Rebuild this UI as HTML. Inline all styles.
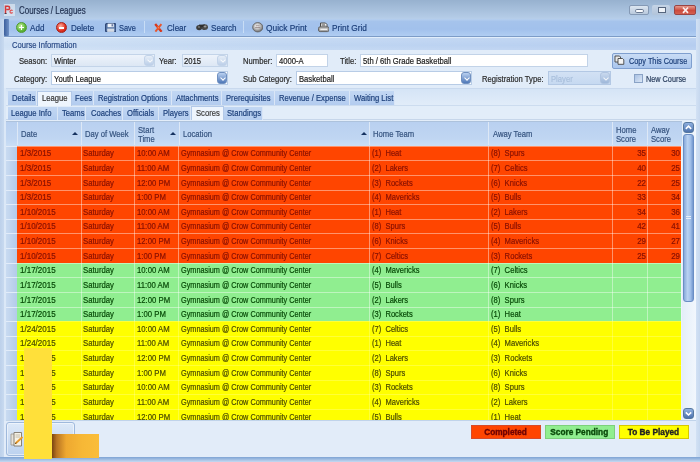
<!DOCTYPE html>
<html><head><meta charset="utf-8">
<style>
*{box-sizing:border-box;margin:0;padding:0}
html,body{width:700px;height:462px;overflow:hidden}
body{position:relative;background:#c9dcf1;font-family:"Liberation Sans",sans-serif;font-size:9px;color:#1f3b6e}
.a{position:absolute}
.t{position:absolute;white-space:nowrap;line-height:9px;font-size:9px;transform:scaleX(.85);transform-origin:0 0}
/* title bar */
#title{left:0;top:0;width:700px;height:19.5px;background:linear-gradient(#97b1cf,#b3cbe6 85%,#b9d0ec)}
#tb{left:4px;top:19px;width:692px;height:18px;background:linear-gradient(#b6cfee,#a5c3ec 15%,#a2c1ec 60%,#b0cdf2);border-bottom:1px solid #7d9cc7}
#tbedge{left:4px;top:19px;width:5px;height:17px;background:linear-gradient(90deg,#3c5f9c,#6f91c6);border-radius:1px}
.sep{position:absolute;top:21px;width:1px;height:12px;background:rgba(225,238,252,.6)}
.tbt{color:#1c3f7a;font-size:9.5px}
#ci{left:4px;top:37px;width:692px;height:13px;background:linear-gradient(rgba(255,255,255,.12),rgba(255,255,255,0) 60%,rgba(255,255,255,.1)),linear-gradient(90deg,#d0e1f5,#c0d6f2 40%,#b5cdf0);border-top:1px solid #e2eefb}
#form{left:4px;top:50px;width:692px;height:38px;background:#e1ecf9}
.inp{position:absolute;background:#fff;border:1px solid #c2d3e8;height:13.8px}
.cmb{position:absolute;border:1px solid #c3d4e9;height:13.8px;background:linear-gradient(#edf3fb,#dde7f4)}
.ddb{position:absolute;right:0;top:0;width:10px;height:11.8px;border-radius:3px;background:linear-gradient(#e6eef8,#bccfe8);border:1px solid #c2d3e9}
.ddb::after{content:"";position:absolute;left:3px;top:2.8px;width:3px;height:3px;border-right:1.1px solid rgba(255,255,255,.85);border-bottom:1.1px solid rgba(255,255,255,.85);transform:rotate(45deg)}
.ddb.act{background:linear-gradient(#b9d0f0,#4f78b8);border-color:#7090c0}
.ddb.act::after{content:"";position:absolute;left:3px;top:3px;width:3px;height:3px;border-right:1.2px solid #fff;border-bottom:1.2px solid #fff;transform:rotate(45deg)}
.lab{color:#2b2b2b}
#tabs{left:4px;top:88px;width:692px;height:18px;background:linear-gradient(#d5e4f6,#e1ecf9);border-top:1px solid #c9d9ee;border-bottom:1px solid #ccdcef}
.tab{position:absolute;height:14px;background:linear-gradient(#c2d7f3,#b3ccef);border-right:1px solid #dae6f6}
.tab.sel{background:#eef5fd;border:1px solid #b3c9e8;border-bottom:none}
#sub{left:4px;top:106px;width:692px;height:14px;background:#e2edf9;border-bottom:1px solid #c6d6ea}
/* grid */
#gridbg{left:4px;top:120px;width:692px;height:300px;background:#e3edf9}
#ghead{left:6px;top:121px;width:675.5px;height:24.7px;background:linear-gradient(#b9d0f0,#c0d6f2 70%,#cadef5);border-top:1px solid #adc2dc}
.hsep{position:absolute;top:122px;width:1px;height:23px;background:#dde8f6}
.ht{color:#34527e;-webkit-text-stroke:.1px currentColor}
.arrow{position:absolute;width:0;height:0;border-left:3px solid transparent;border-right:3px solid transparent;border-bottom:3.2px solid #15315f}
#rows{left:17px;top:0;width:664.5px;height:420px;overflow:hidden;position:absolute}
.row{position:absolute;left:17.3px;width:664.1px;height:14.625px;box-shadow:inset 0 1px 0 rgba(255,255,255,.42)}
.vl{position:absolute;top:0;width:1px;height:100%;background:rgba(255,255,255,.42)}
.row.r{background:#ff4500;color:#861000}
.row.g{background:#90ee90;color:#064806}
.row.y{background:#ffff00;color:#4a4a00;box-shadow:inset 0 1px 0 rgba(255,255,255,.22)}
.row.y .vl{background:rgba(255,255,255,.22)}
.ct{position:absolute;top:3.6px;white-space:nowrap;line-height:9px;font-size:9px;transform:scaleX(.85);transform-origin:0 0}
.ct.rt{transform-origin:100% 0}
.rh{position:absolute;left:6px;width:11px;height:14.625px;background:linear-gradient(90deg,#c9dbf1,#b3cbea);border-top:1px solid #e2ecf9}
#clip{position:absolute;left:0;top:145.7px;width:700px;height:274.3px;overflow:hidden}
/* scrollbar */
#sb{left:681.5px;top:121px;width:14px;height:299px;background:linear-gradient(90deg,#e4eef9,#f2f7fd)}
.sbb{position:absolute;left:682.7px;width:11px;height:11px;border-radius:3px;background:linear-gradient(#8fb0e0,#4d72ad);border:1px solid #56789f}
#thumb{left:682.8px;top:134px;width:11.2px;height:167.5px;border-radius:3px;background:linear-gradient(90deg,#87a9da,#b9d2f2 40%,#a3c1ea 70%,#7498cf);border:1px solid #6a8ec5}
#foot{left:4px;top:420px;width:692px;height:38px;background:#e2ecf9;border-top:1px solid #c0d3ea}
.leg{position:absolute;top:425px;height:14px;font-weight:bold;font-size:9.5px;text-align:center;line-height:10px;padding-top:1px;-webkit-text-stroke:.4px currentColor}
#border-b{left:0;top:457px;width:700px;height:5px;background:linear-gradient(#7ea3d4,#c5d9f1)}
#wrap{position:absolute;left:0;top:0;width:700px;height:462px;filter:blur(.5px)}
.ct,.t{-webkit-text-stroke:.2px currentColor}
</style></head><body><div id="wrap">
<!-- title bar -->
<div id="title" class="a"></div>
<div class="a" style="left:3.5px;top:3.5px;width:11px;height:12px;background:rgba(240,246,252,.55)"></div>
<svg class="a" style="left:4px;top:4.5px" width="9" height="9" viewBox="0 0 9 9"><path d="M1.5 8.5V1.2H3.8Q5.6 1.2 5.6 2.9Q5.6 4.6 3.8 4.6H2.4" fill="none" stroke="#d43a3a" stroke-width="1.5"/><path d="M8.6 5.6Q8 5 7.2 5.1Q6 5.4 6 6.7Q6.1 8.1 7.3 8.1Q8.1 8.1 8.6 7.5" fill="none" stroke="#e05050" stroke-width="1.2"/><path d="M0.6 8.6H2.6" stroke="#3a3040" stroke-width="1"/></svg>
<span class="t" style="left:19px;top:5.5px;font-size:10px;color:#1f2f4f;transform:scaleX(.795)">Courses / Leagues</span>
<!-- window buttons -->
<div class="a" style="left:628.6px;top:4.6px;width:20.4px;height:10.8px;border:1px solid #8499b5;border-radius:2px;background:linear-gradient(#dce6f1,#b9c9dc)"></div>
<div class="a" style="left:635px;top:9px;width:8.8px;height:3.6px;background:#fafcff;border:.8px solid #6a7a92;border-radius:1.8px"></div>
<div class="a" style="left:652px;top:4.6px;width:18.3px;height:10.8px;border-radius:2px;background:linear-gradient(#c5d4e6,#b2c4da)"></div>
<div class="a" style="left:657.7px;top:7.4px;width:8px;height:5.2px;background:#eef2f7;border:1px solid #56667e;border-top-width:1.6px"></div>
<div class="a" style="left:674px;top:4.6px;width:22px;height:10.8px;border:1px solid #9a4545;border-radius:2px;background:linear-gradient(#e49a8e,#cc4a3c 55%,#d46050)"></div>
<svg class="a" style="left:680.5px;top:5.8px" width="9" height="8.4" viewBox="0 0 9 8.4"><path d="M2 1.5L7 6.9M7 1.5L2 6.9" stroke="#fbeeee" stroke-width="1.7"/></svg>
<!-- toolbar -->
<div id="tb" class="a"></div>
<div id="tbedge" class="a"></div>
<div class="a" style="left:16px;top:22px;width:11px;height:11px;border-radius:50%;background:radial-gradient(circle at 40% 35%,#c8f0a0,#5fb83a 60%,#3d8c22);border:1px solid #4f9a30"></div>
<div class="a" style="left:19px;top:27px;width:5px;height:1.4px;background:#fff"></div>
<div class="a" style="left:20.8px;top:25.2px;width:1.4px;height:5px;background:#fff"></div>
<span class="t tbt" style="left:30px;top:23px">Add</span>
<div class="a" style="left:56px;top:22px;width:11px;height:11px;border-radius:50%;background:radial-gradient(circle at 40% 35%,#ffb0a0,#e03020 60%,#b01810);border:1px solid #a82018"></div>
<div class="a" style="left:59px;top:27px;width:5px;height:1.6px;background:#fff"></div>
<span class="t tbt" style="left:71px;top:23px">Delete</span>
<svg class="a" style="left:104.5px;top:22.5px" width="11.5" height="9.5" viewBox="0 0 11.5 9.5"><rect x="0.6" y="0.6" width="10.3" height="8.3" rx="1.2" fill="#5a78a8" stroke="#2a4373" stroke-width="1.1"/><rect x="2.6" y="0.6" width="6.2" height="3.6" fill="#eef2f8"/><rect x="2.2" y="5.6" width="7" height="3.3" fill="#d4dbe6"/><rect x="6.6" y="1.2" width="1.2" height="2.2" fill="#44598a"/></svg>
<span class="t tbt" style="left:119px;top:23px;transform:scaleX(.78)">Save</span>
<div class="sep" style="left:144px"></div>
<svg class="a" style="left:153.5px;top:22.5px" width="9" height="9.5" viewBox="0 0 9 9.5"><path d="M1.2 1 L7.6 8.8" stroke="#d8381c" stroke-width="2.3"/><path d="M7.4 1.2 L1.4 8.6" stroke="#e9552a" stroke-width="1.9"/><path d="M3.5 3.6L5.2 5.6" stroke="#ff9a60" stroke-width=".9"/></svg>
<span class="t tbt" style="left:167px;top:23px">Clear</span>
<svg class="a" style="left:195.5px;top:23px" width="12.5" height="8" viewBox="0 0 12.5 8"><ellipse cx="3.2" cy="4.6" rx="3" ry="2.6" fill="#3a3a3a"/><ellipse cx="8.8" cy="4.2" rx="3.3" ry="2.9" fill="#4a4a4a"/><rect x="3" y="1.6" width="6" height="2.6" fill="#2e2e2e"/><ellipse cx="9" cy="3.6" rx="1.5" ry="1" fill="#9a9a9a"/><ellipse cx="3" cy="4" rx="1.2" ry=".8" fill="#888"/></svg>
<span class="t tbt" style="left:210.5px;top:23px">Search</span>
<div class="sep" style="left:243px"></div>
<svg class="a" style="left:251.5px;top:22px" width="11.5" height="10.5" viewBox="0 0 11.5 10.5"><defs><radialGradient id="qp" cx="45%" cy="40%" r="60%"><stop offset="0" stop-color="#ffffff"/><stop offset=".45" stop-color="#c9c9c9"/><stop offset="1" stop-color="#6a6a6a"/></radialGradient></defs><ellipse cx="5.75" cy="5.25" rx="5.1" ry="4.7" fill="url(#qp)" stroke="#5f5f5f" stroke-width=".8"/><path d="M3.2 5.6H8.3M4 3.8H7.5" stroke="#8a7a7a" stroke-width=".8"/></svg>
<span class="t tbt" style="left:266px;top:23px;transform:scaleX(.88)">Quick Print</span>
<svg class="a" style="left:317.5px;top:22px" width="11.5" height="10.5" viewBox="0 0 11.5 10.5"><path d="M2.5 5V1H7.5L9 2.5V5" fill="#f4f4f4" stroke="#4a4a4a" stroke-width="1"/><path d="M3.6 2.3H7M3.6 3.6H7.4" stroke="#5a5a5a" stroke-width=".7"/><rect x="0.5" y="4.8" width="10.5" height="4.8" rx="1.6" fill="#a9a9a9" stroke="#5a5a5a" stroke-width=".9"/><rect x="2.3" y="6.6" width="7" height="1.4" fill="#eee"/></svg>
<span class="t tbt" style="left:332px;top:23px;transform:scaleX(.87)">Print Grid</span>
<!-- course information -->
<div id="ci" class="a"></div>
<span class="t" style="left:11.5px;top:40px;color:#2a4a86;font-size:9.5px;transform:scaleX(.8)">Course Information</span>
<div id="form" class="a"></div>
<span class="t lab" style="left:19px;top:56.6px">Season:</span>
<div class="cmb" style="left:51px;top:53.7px;width:104px"><div class="ddb"></div></div>
<span class="t" style="left:54px;top:56.6px;color:#222">Winter</span>
<span class="t lab" style="left:159px;top:56.6px">Year:</span>
<div class="cmb" style="left:181.5px;top:53.7px;width:46.5px"><div class="ddb"></div></div>
<span class="t" style="left:184px;top:56.6px;color:#222">2015</span>
<span class="t lab" style="left:243px;top:56.6px">Number:</span>
<div class="inp" style="left:276px;top:53.7px;width:52px"></div>
<span class="t" style="left:279px;top:56.6px;color:#222">4000-A</span>
<span class="t lab" style="left:339.5px;top:56.6px">Title:</span>
<div class="inp" style="left:360px;top:53.7px;width:228px"></div>
<span class="t" style="left:363px;top:56.6px;color:#222">5th / 6th Grade Basketball</span>
<div class="a" style="left:612px;top:53px;width:80px;height:15.5px;border:1px solid #7f9fcf;border-radius:2px;background:linear-gradient(#c9dcf5,#a9c5ed)"></div>
<svg class="a" style="left:614px;top:54.5px" width="11" height="10" viewBox="0 0 11 10"><path d="M1 1H5.5L6.5 2V7H1Z" fill="#e8e8e8" stroke="#444" stroke-width=".9"/><path d="M4 3.5H8.5L9.8 4.8V9.3H4Z" fill="#f4f4f4" stroke="#444" stroke-width=".9"/></svg>
<span class="t" style="left:629px;top:56.5px;color:#1c3f7a;transform:scaleX(.81)">Copy This Course</span>
<span class="t lab" style="left:13.5px;top:74.5px">Category:</span>
<div class="inp" style="left:51px;top:71.3px;width:176.5px;border-color:#b8cce6"><div class="ddb act"></div></div>
<span class="t" style="left:54px;top:74.5px;color:#222">Youth League</span>
<span class="t lab" style="left:243px;top:74.5px">Sub Category:</span>
<div class="inp" style="left:296px;top:71.3px;width:176px;border-color:#b8cce6"><div class="ddb act"></div></div>
<span class="t" style="left:299px;top:74.5px;color:#222">Basketball</span>
<span class="t lab" style="left:481.5px;top:74.5px">Registration Type:</span>
<div class="cmb" style="left:548px;top:71.3px;width:63px;background:linear-gradient(#d2e1f4,#c6d9f1);border-color:#b3c8e4"><div class="ddb" style="background:linear-gradient(#c9d9ee,#9fb8da);border-color:#b0c4e0"></div></div>
<span class="t" style="left:551px;top:74.5px;color:#a9bfdc">Player</span>
<div class="a" style="left:634px;top:74px;width:9px;height:9px;border:1px solid #8aa3c6;background:linear-gradient(135deg,#a9c1e3,#dbe7f6)"></div>
<span class="t" style="left:646px;top:74.5px;color:#2a3e5e;transform:scaleX(.81)">New Course</span>
<!-- tabs -->
<div id="tabs" class="a"></div>
<div class="tab" style="left:8px;top:91px;width:29px"></div>
<div class="tab sel" style="left:37px;top:90.5px;width:35px;height:16px"></div>
<div class="tab" style="left:72px;top:91px;width:22px"></div>
<div class="tab" style="left:94px;top:91px;width:78px"></div>
<div class="tab" style="left:172px;top:91px;width:50px"></div>
<div class="tab" style="left:222px;top:91px;width:53px"></div>
<div class="tab" style="left:275px;top:91px;width:75px"></div>
<div class="tab" style="left:350px;top:91px;width:44.5px"></div>
<span class="t tbt" style="left:11.5px;top:94px;font-size:9px">Details</span>
<span class="t" style="left:42px;top:94px;color:#333">League</span>
<span class="t tbt" style="left:75px;top:94px;font-size:9px">Fees</span>
<span class="t tbt" style="left:98px;top:94px;font-size:9px">Registration Options</span>
<span class="t tbt" style="left:175.5px;top:94px;font-size:9px">Attachments</span>
<span class="t tbt" style="left:225.5px;top:94px;font-size:9px">Prerequisites</span>
<span class="t tbt" style="left:279px;top:94px;font-size:9px">Revenue / Expense</span>
<span class="t tbt" style="left:353.5px;top:94px;font-size:9px">Waiting List</span>
<div id="sub" class="a"></div>
<div class="tab" style="left:8px;top:106.5px;width:50px;height:13.5px"></div>
<div class="tab" style="left:58px;top:106.5px;width:28px;height:13.5px"></div>
<div class="tab" style="left:86px;top:106.5px;width:37px;height:13.5px"></div>
<div class="tab" style="left:123px;top:106.5px;width:36px;height:13.5px"></div>
<div class="tab" style="left:159px;top:106.5px;width:32px;height:13.5px"></div>
<div class="tab sel" style="left:191px;top:106px;width:33px;height:14.5px"></div>
<div class="tab" style="left:224px;top:106.5px;width:38.5px;height:13.5px"></div>
<span class="t tbt" style="left:11px;top:109px;font-size:9px">League Info</span>
<span class="t tbt" style="left:61.5px;top:109px;font-size:9px">Teams</span>
<span class="t tbt" style="left:91px;top:109px;font-size:9px">Coaches</span>
<span class="t tbt" style="left:126.5px;top:109px;font-size:9px">Officials</span>
<span class="t tbt" style="left:163px;top:109px;font-size:9px">Players</span>
<span class="t" style="left:196px;top:109px;color:#3c3c3c">Scores</span>
<span class="t tbt" style="left:226.5px;top:109px;font-size:9px">Standings</span>
<!-- grid -->
<div id="gridbg" class="a"></div>
<div id="ghead" class="a"></div>

<div class="hsep" style="left:16.8px"></div>
<div class="hsep" style="left:80.9px"></div>
<div class="hsep" style="left:134.0px"></div>
<div class="hsep" style="left:178.5px"></div>
<div class="hsep" style="left:369.0px"></div>
<div class="hsep" style="left:488.0px"></div>
<div class="hsep" style="left:611.8px"></div>
<div class="hsep" style="left:646.7px"></div>
<span class="t ht" style="left:21px;top:130px">Date</span>
<div class="arrow" style="left:72px;top:132px"></div>
<span class="t ht" style="left:85px;top:130px">Day of Week</span>
<span class="t ht" style="left:138.4px;top:125.5px">Start</span>
<span class="t ht" style="left:138.4px;top:134.5px">Time</span>
<div class="arrow" style="left:169.8px;top:132px"></div>
<span class="t ht" style="left:183px;top:130px">Location</span>
<div class="arrow" style="left:360.5px;top:132px"></div>
<span class="t ht" style="left:373px;top:130px">Home Team</span>
<span class="t ht" style="left:492.5px;top:130px">Away Team</span>
<span class="t ht" style="left:616px;top:125.5px">Home</span>
<span class="t ht" style="left:616px;top:134.5px">Score</span>
<span class="t ht" style="left:651px;top:125.5px">Away</span>
<span class="t ht" style="left:651px;top:134.5px">Score</span>
<div id="clip">
<div style="position:absolute;left:0;top:-145.7px;width:700px;height:600px">
<div class="row r" style="top:145.700px"><div class="vl" style="left:63.60px"></div><div class="vl" style="left:116.70px"></div><div class="vl" style="left:161.20px"></div><div class="vl" style="left:351.70px"></div><div class="vl" style="left:470.70px"></div><div class="vl" style="left:594.50px"></div><div class="vl" style="left:629.40px"></div><div class="vl" style="left:663.60px"></div><span class="ct" style="left:3.00px;transform:scaleX(0.89)">1/3/2015</span><span class="ct" style="left:65.70px;transform:scaleX(0.86)">Saturday</span><span class="ct" style="left:120.20px;transform:scaleX(0.86)">10:00 AM</span><span class="ct" style="left:163.70px;transform:scaleX(0.81)">Gymnasium @ Crow Community Center</span><span class="ct" style="left:354.70px;transform:scaleX(0.84)">(1)&nbsp; Heat</span><span class="ct" style="left:474.20px;transform:scaleX(0.85)">(8)&nbsp; Spurs</span><span class="ct rt" style="left:auto;right:35.80px;transform:scaleX(0.88)">35</span><span class="ct rt" style="left:auto;right:1.60px;transform:scaleX(0.88)">30</span></div><div class="rh" style="top:145.700px"></div>
<div class="row r" style="top:160.325px"><div class="vl" style="left:63.60px"></div><div class="vl" style="left:116.70px"></div><div class="vl" style="left:161.20px"></div><div class="vl" style="left:351.70px"></div><div class="vl" style="left:470.70px"></div><div class="vl" style="left:594.50px"></div><div class="vl" style="left:629.40px"></div><div class="vl" style="left:663.60px"></div><span class="ct" style="left:3.00px;transform:scaleX(0.89)">1/3/2015</span><span class="ct" style="left:65.70px;transform:scaleX(0.86)">Saturday</span><span class="ct" style="left:120.20px;transform:scaleX(0.86)">11:00 AM</span><span class="ct" style="left:163.70px;transform:scaleX(0.81)">Gymnasium @ Crow Community Center</span><span class="ct" style="left:354.70px;transform:scaleX(0.84)">(2)&nbsp; Lakers</span><span class="ct" style="left:474.20px;transform:scaleX(0.85)">(7)&nbsp; Celtics</span><span class="ct rt" style="left:auto;right:35.80px;transform:scaleX(0.88)">40</span><span class="ct rt" style="left:auto;right:1.60px;transform:scaleX(0.88)">25</span></div><div class="rh" style="top:160.325px"></div>
<div class="row r" style="top:174.950px"><div class="vl" style="left:63.60px"></div><div class="vl" style="left:116.70px"></div><div class="vl" style="left:161.20px"></div><div class="vl" style="left:351.70px"></div><div class="vl" style="left:470.70px"></div><div class="vl" style="left:594.50px"></div><div class="vl" style="left:629.40px"></div><div class="vl" style="left:663.60px"></div><span class="ct" style="left:3.00px;transform:scaleX(0.89)">1/3/2015</span><span class="ct" style="left:65.70px;transform:scaleX(0.86)">Saturday</span><span class="ct" style="left:120.20px;transform:scaleX(0.86)">12:00 PM</span><span class="ct" style="left:163.70px;transform:scaleX(0.81)">Gymnasium @ Crow Community Center</span><span class="ct" style="left:354.70px;transform:scaleX(0.84)">(3)&nbsp; Rockets</span><span class="ct" style="left:474.20px;transform:scaleX(0.85)">(6)&nbsp; Knicks</span><span class="ct rt" style="left:auto;right:35.80px;transform:scaleX(0.88)">22</span><span class="ct rt" style="left:auto;right:1.60px;transform:scaleX(0.88)">25</span></div><div class="rh" style="top:174.950px"></div>
<div class="row r" style="top:189.575px"><div class="vl" style="left:63.60px"></div><div class="vl" style="left:116.70px"></div><div class="vl" style="left:161.20px"></div><div class="vl" style="left:351.70px"></div><div class="vl" style="left:470.70px"></div><div class="vl" style="left:594.50px"></div><div class="vl" style="left:629.40px"></div><div class="vl" style="left:663.60px"></div><span class="ct" style="left:3.00px;transform:scaleX(0.89)">1/3/2015</span><span class="ct" style="left:65.70px;transform:scaleX(0.86)">Saturday</span><span class="ct" style="left:120.20px;transform:scaleX(0.86)">1:00 PM</span><span class="ct" style="left:163.70px;transform:scaleX(0.81)">Gymnasium @ Crow Community Center</span><span class="ct" style="left:354.70px;transform:scaleX(0.84)">(4)&nbsp; Mavericks</span><span class="ct" style="left:474.20px;transform:scaleX(0.85)">(5)&nbsp; Bulls</span><span class="ct rt" style="left:auto;right:35.80px;transform:scaleX(0.88)">33</span><span class="ct rt" style="left:auto;right:1.60px;transform:scaleX(0.88)">34</span></div><div class="rh" style="top:189.575px"></div>
<div class="row r" style="top:204.200px"><div class="vl" style="left:63.60px"></div><div class="vl" style="left:116.70px"></div><div class="vl" style="left:161.20px"></div><div class="vl" style="left:351.70px"></div><div class="vl" style="left:470.70px"></div><div class="vl" style="left:594.50px"></div><div class="vl" style="left:629.40px"></div><div class="vl" style="left:663.60px"></div><span class="ct" style="left:3.00px;transform:scaleX(0.89)">1/10/2015</span><span class="ct" style="left:65.70px;transform:scaleX(0.86)">Saturday</span><span class="ct" style="left:120.20px;transform:scaleX(0.86)">10:00 AM</span><span class="ct" style="left:163.70px;transform:scaleX(0.81)">Gymnasium @ Crow Community Center</span><span class="ct" style="left:354.70px;transform:scaleX(0.84)">(1)&nbsp; Heat</span><span class="ct" style="left:474.20px;transform:scaleX(0.85)">(2)&nbsp; Lakers</span><span class="ct rt" style="left:auto;right:35.80px;transform:scaleX(0.88)">34</span><span class="ct rt" style="left:auto;right:1.60px;transform:scaleX(0.88)">36</span></div><div class="rh" style="top:204.200px"></div>
<div class="row r" style="top:218.825px"><div class="vl" style="left:63.60px"></div><div class="vl" style="left:116.70px"></div><div class="vl" style="left:161.20px"></div><div class="vl" style="left:351.70px"></div><div class="vl" style="left:470.70px"></div><div class="vl" style="left:594.50px"></div><div class="vl" style="left:629.40px"></div><div class="vl" style="left:663.60px"></div><span class="ct" style="left:3.00px;transform:scaleX(0.89)">1/10/2015</span><span class="ct" style="left:65.70px;transform:scaleX(0.86)">Saturday</span><span class="ct" style="left:120.20px;transform:scaleX(0.86)">11:00 AM</span><span class="ct" style="left:163.70px;transform:scaleX(0.81)">Gymnasium @ Crow Community Center</span><span class="ct" style="left:354.70px;transform:scaleX(0.84)">(8)&nbsp; Spurs</span><span class="ct" style="left:474.20px;transform:scaleX(0.85)">(5)&nbsp; Bulls</span><span class="ct rt" style="left:auto;right:35.80px;transform:scaleX(0.88)">42</span><span class="ct rt" style="left:auto;right:1.60px;transform:scaleX(0.88)">41</span></div><div class="rh" style="top:218.825px"></div>
<div class="row r" style="top:233.450px"><div class="vl" style="left:63.60px"></div><div class="vl" style="left:116.70px"></div><div class="vl" style="left:161.20px"></div><div class="vl" style="left:351.70px"></div><div class="vl" style="left:470.70px"></div><div class="vl" style="left:594.50px"></div><div class="vl" style="left:629.40px"></div><div class="vl" style="left:663.60px"></div><span class="ct" style="left:3.00px;transform:scaleX(0.89)">1/10/2015</span><span class="ct" style="left:65.70px;transform:scaleX(0.86)">Saturday</span><span class="ct" style="left:120.20px;transform:scaleX(0.86)">12:00 PM</span><span class="ct" style="left:163.70px;transform:scaleX(0.81)">Gymnasium @ Crow Community Center</span><span class="ct" style="left:354.70px;transform:scaleX(0.84)">(6)&nbsp; Knicks</span><span class="ct" style="left:474.20px;transform:scaleX(0.85)">(4)&nbsp; Mavericks</span><span class="ct rt" style="left:auto;right:35.80px;transform:scaleX(0.88)">29</span><span class="ct rt" style="left:auto;right:1.60px;transform:scaleX(0.88)">27</span></div><div class="rh" style="top:233.450px"></div>
<div class="row r" style="top:248.075px"><div class="vl" style="left:63.60px"></div><div class="vl" style="left:116.70px"></div><div class="vl" style="left:161.20px"></div><div class="vl" style="left:351.70px"></div><div class="vl" style="left:470.70px"></div><div class="vl" style="left:594.50px"></div><div class="vl" style="left:629.40px"></div><div class="vl" style="left:663.60px"></div><span class="ct" style="left:3.00px;transform:scaleX(0.89)">1/10/2015</span><span class="ct" style="left:65.70px;transform:scaleX(0.86)">Saturday</span><span class="ct" style="left:120.20px;transform:scaleX(0.86)">1:00 PM</span><span class="ct" style="left:163.70px;transform:scaleX(0.81)">Gymnasium @ Crow Community Center</span><span class="ct" style="left:354.70px;transform:scaleX(0.84)">(7)&nbsp; Celtics</span><span class="ct" style="left:474.20px;transform:scaleX(0.85)">(3)&nbsp; Rockets</span><span class="ct rt" style="left:auto;right:35.80px;transform:scaleX(0.88)">25</span><span class="ct rt" style="left:auto;right:1.60px;transform:scaleX(0.88)">29</span></div><div class="rh" style="top:248.075px"></div>
<div class="row g" style="top:262.700px"><div class="vl" style="left:63.60px"></div><div class="vl" style="left:116.70px"></div><div class="vl" style="left:161.20px"></div><div class="vl" style="left:351.70px"></div><div class="vl" style="left:470.70px"></div><div class="vl" style="left:594.50px"></div><div class="vl" style="left:629.40px"></div><div class="vl" style="left:663.60px"></div><span class="ct" style="left:3.00px;transform:scaleX(0.89)">1/17/2015</span><span class="ct" style="left:65.70px;transform:scaleX(0.86)">Saturday</span><span class="ct" style="left:120.20px;transform:scaleX(0.86)">10:00 AM</span><span class="ct" style="left:163.70px;transform:scaleX(0.81)">Gymnasium @ Crow Community Center</span><span class="ct" style="left:354.70px;transform:scaleX(0.84)">(4)&nbsp; Mavericks</span><span class="ct" style="left:474.20px;transform:scaleX(0.85)">(7)&nbsp; Celtics</span><span class="ct rt" style="left:auto;right:35.80px;transform:scaleX(0.88)"></span><span class="ct rt" style="left:auto;right:1.60px;transform:scaleX(0.88)"></span></div><div class="rh" style="top:262.700px"></div>
<div class="row g" style="top:277.325px"><div class="vl" style="left:63.60px"></div><div class="vl" style="left:116.70px"></div><div class="vl" style="left:161.20px"></div><div class="vl" style="left:351.70px"></div><div class="vl" style="left:470.70px"></div><div class="vl" style="left:594.50px"></div><div class="vl" style="left:629.40px"></div><div class="vl" style="left:663.60px"></div><span class="ct" style="left:3.00px;transform:scaleX(0.89)">1/17/2015</span><span class="ct" style="left:65.70px;transform:scaleX(0.86)">Saturday</span><span class="ct" style="left:120.20px;transform:scaleX(0.86)">11:00 AM</span><span class="ct" style="left:163.70px;transform:scaleX(0.81)">Gymnasium @ Crow Community Center</span><span class="ct" style="left:354.70px;transform:scaleX(0.84)">(5)&nbsp; Bulls</span><span class="ct" style="left:474.20px;transform:scaleX(0.85)">(6)&nbsp; Knicks</span><span class="ct rt" style="left:auto;right:35.80px;transform:scaleX(0.88)"></span><span class="ct rt" style="left:auto;right:1.60px;transform:scaleX(0.88)"></span></div><div class="rh" style="top:277.325px"></div>
<div class="row g" style="top:291.950px"><div class="vl" style="left:63.60px"></div><div class="vl" style="left:116.70px"></div><div class="vl" style="left:161.20px"></div><div class="vl" style="left:351.70px"></div><div class="vl" style="left:470.70px"></div><div class="vl" style="left:594.50px"></div><div class="vl" style="left:629.40px"></div><div class="vl" style="left:663.60px"></div><span class="ct" style="left:3.00px;transform:scaleX(0.89)">1/17/2015</span><span class="ct" style="left:65.70px;transform:scaleX(0.86)">Saturday</span><span class="ct" style="left:120.20px;transform:scaleX(0.86)">12:00 PM</span><span class="ct" style="left:163.70px;transform:scaleX(0.81)">Gymnasium @ Crow Community Center</span><span class="ct" style="left:354.70px;transform:scaleX(0.84)">(2)&nbsp; Lakers</span><span class="ct" style="left:474.20px;transform:scaleX(0.85)">(8)&nbsp; Spurs</span><span class="ct rt" style="left:auto;right:35.80px;transform:scaleX(0.88)"></span><span class="ct rt" style="left:auto;right:1.60px;transform:scaleX(0.88)"></span></div><div class="rh" style="top:291.950px"></div>
<div class="row g" style="top:306.575px"><div class="vl" style="left:63.60px"></div><div class="vl" style="left:116.70px"></div><div class="vl" style="left:161.20px"></div><div class="vl" style="left:351.70px"></div><div class="vl" style="left:470.70px"></div><div class="vl" style="left:594.50px"></div><div class="vl" style="left:629.40px"></div><div class="vl" style="left:663.60px"></div><span class="ct" style="left:3.00px;transform:scaleX(0.89)">1/17/2015</span><span class="ct" style="left:65.70px;transform:scaleX(0.86)">Saturday</span><span class="ct" style="left:120.20px;transform:scaleX(0.86)">1:00 PM</span><span class="ct" style="left:163.70px;transform:scaleX(0.81)">Gymnasium @ Crow Community Center</span><span class="ct" style="left:354.70px;transform:scaleX(0.84)">(3)&nbsp; Rockets</span><span class="ct" style="left:474.20px;transform:scaleX(0.85)">(1)&nbsp; Heat</span><span class="ct rt" style="left:auto;right:35.80px;transform:scaleX(0.88)"></span><span class="ct rt" style="left:auto;right:1.60px;transform:scaleX(0.88)"></span></div><div class="rh" style="top:306.575px"></div>
<div class="row y" style="top:321.200px"><div class="vl" style="left:63.60px"></div><div class="vl" style="left:116.70px"></div><div class="vl" style="left:161.20px"></div><div class="vl" style="left:351.70px"></div><div class="vl" style="left:470.70px"></div><div class="vl" style="left:594.50px"></div><div class="vl" style="left:629.40px"></div><div class="vl" style="left:663.60px"></div><span class="ct" style="left:3.00px;transform:scaleX(0.89)">1/24/2015</span><span class="ct" style="left:65.70px;transform:scaleX(0.86)">Saturday</span><span class="ct" style="left:120.20px;transform:scaleX(0.86)">10:00 AM</span><span class="ct" style="left:163.70px;transform:scaleX(0.81)">Gymnasium @ Crow Community Center</span><span class="ct" style="left:354.70px;transform:scaleX(0.84)">(7)&nbsp; Celtics</span><span class="ct" style="left:474.20px;transform:scaleX(0.85)">(5)&nbsp; Bulls</span><span class="ct rt" style="left:auto;right:35.80px;transform:scaleX(0.88)"></span><span class="ct rt" style="left:auto;right:1.60px;transform:scaleX(0.88)"></span></div><div class="rh" style="top:321.200px"></div>
<div class="row y" style="top:335.825px"><div class="vl" style="left:63.60px"></div><div class="vl" style="left:116.70px"></div><div class="vl" style="left:161.20px"></div><div class="vl" style="left:351.70px"></div><div class="vl" style="left:470.70px"></div><div class="vl" style="left:594.50px"></div><div class="vl" style="left:629.40px"></div><div class="vl" style="left:663.60px"></div><span class="ct" style="left:3.00px;transform:scaleX(0.89)">1/24/2015</span><span class="ct" style="left:65.70px;transform:scaleX(0.86)">Saturday</span><span class="ct" style="left:120.20px;transform:scaleX(0.86)">11:00 AM</span><span class="ct" style="left:163.70px;transform:scaleX(0.81)">Gymnasium @ Crow Community Center</span><span class="ct" style="left:354.70px;transform:scaleX(0.84)">(1)&nbsp; Heat</span><span class="ct" style="left:474.20px;transform:scaleX(0.85)">(4)&nbsp; Mavericks</span><span class="ct rt" style="left:auto;right:35.80px;transform:scaleX(0.88)"></span><span class="ct rt" style="left:auto;right:1.60px;transform:scaleX(0.88)"></span></div><div class="rh" style="top:335.825px"></div>
<div class="row y" style="top:350.450px"><div class="vl" style="left:63.60px"></div><div class="vl" style="left:116.70px"></div><div class="vl" style="left:161.20px"></div><div class="vl" style="left:351.70px"></div><div class="vl" style="left:470.70px"></div><div class="vl" style="left:594.50px"></div><div class="vl" style="left:629.40px"></div><div class="vl" style="left:663.60px"></div><span class="ct" style="left:3.00px;transform:scaleX(0.89)">1/24/2015</span><span class="ct" style="left:65.70px;transform:scaleX(0.86)">Saturday</span><span class="ct" style="left:120.20px;transform:scaleX(0.86)">12:00 PM</span><span class="ct" style="left:163.70px;transform:scaleX(0.81)">Gymnasium @ Crow Community Center</span><span class="ct" style="left:354.70px;transform:scaleX(0.84)">(2)&nbsp; Lakers</span><span class="ct" style="left:474.20px;transform:scaleX(0.85)">(3)&nbsp; Rockets</span><span class="ct rt" style="left:auto;right:35.80px;transform:scaleX(0.88)"></span><span class="ct rt" style="left:auto;right:1.60px;transform:scaleX(0.88)"></span></div><div class="rh" style="top:350.450px"></div>
<div class="row y" style="top:365.075px"><div class="vl" style="left:63.60px"></div><div class="vl" style="left:116.70px"></div><div class="vl" style="left:161.20px"></div><div class="vl" style="left:351.70px"></div><div class="vl" style="left:470.70px"></div><div class="vl" style="left:594.50px"></div><div class="vl" style="left:629.40px"></div><div class="vl" style="left:663.60px"></div><span class="ct" style="left:3.00px;transform:scaleX(0.89)">1/24/2015</span><span class="ct" style="left:65.70px;transform:scaleX(0.86)">Saturday</span><span class="ct" style="left:120.20px;transform:scaleX(0.86)">1:00 PM</span><span class="ct" style="left:163.70px;transform:scaleX(0.81)">Gymnasium @ Crow Community Center</span><span class="ct" style="left:354.70px;transform:scaleX(0.84)">(8)&nbsp; Spurs</span><span class="ct" style="left:474.20px;transform:scaleX(0.85)">(6)&nbsp; Knicks</span><span class="ct rt" style="left:auto;right:35.80px;transform:scaleX(0.88)"></span><span class="ct rt" style="left:auto;right:1.60px;transform:scaleX(0.88)"></span></div><div class="rh" style="top:365.075px"></div>
<div class="row y" style="top:379.700px"><div class="vl" style="left:63.60px"></div><div class="vl" style="left:116.70px"></div><div class="vl" style="left:161.20px"></div><div class="vl" style="left:351.70px"></div><div class="vl" style="left:470.70px"></div><div class="vl" style="left:594.50px"></div><div class="vl" style="left:629.40px"></div><div class="vl" style="left:663.60px"></div><span class="ct" style="left:3.00px;transform:scaleX(0.89)">1/24/2015</span><span class="ct" style="left:65.70px;transform:scaleX(0.86)">Saturday</span><span class="ct" style="left:120.20px;transform:scaleX(0.86)">10:00 AM</span><span class="ct" style="left:163.70px;transform:scaleX(0.81)">Gymnasium @ Crow Community Center</span><span class="ct" style="left:354.70px;transform:scaleX(0.84)">(3)&nbsp; Rockets</span><span class="ct" style="left:474.20px;transform:scaleX(0.85)">(8)&nbsp; Spurs</span><span class="ct rt" style="left:auto;right:35.80px;transform:scaleX(0.88)"></span><span class="ct rt" style="left:auto;right:1.60px;transform:scaleX(0.88)"></span></div><div class="rh" style="top:379.700px"></div>
<div class="row y" style="top:394.325px"><div class="vl" style="left:63.60px"></div><div class="vl" style="left:116.70px"></div><div class="vl" style="left:161.20px"></div><div class="vl" style="left:351.70px"></div><div class="vl" style="left:470.70px"></div><div class="vl" style="left:594.50px"></div><div class="vl" style="left:629.40px"></div><div class="vl" style="left:663.60px"></div><span class="ct" style="left:3.00px;transform:scaleX(0.89)">1/24/2015</span><span class="ct" style="left:65.70px;transform:scaleX(0.86)">Saturday</span><span class="ct" style="left:120.20px;transform:scaleX(0.86)">11:00 AM</span><span class="ct" style="left:163.70px;transform:scaleX(0.81)">Gymnasium @ Crow Community Center</span><span class="ct" style="left:354.70px;transform:scaleX(0.84)">(4)&nbsp; Mavericks</span><span class="ct" style="left:474.20px;transform:scaleX(0.85)">(2)&nbsp; Lakers</span><span class="ct rt" style="left:auto;right:35.80px;transform:scaleX(0.88)"></span><span class="ct rt" style="left:auto;right:1.60px;transform:scaleX(0.88)"></span></div><div class="rh" style="top:394.325px"></div>
<div class="row y" style="top:408.950px"><div class="vl" style="left:63.60px"></div><div class="vl" style="left:116.70px"></div><div class="vl" style="left:161.20px"></div><div class="vl" style="left:351.70px"></div><div class="vl" style="left:470.70px"></div><div class="vl" style="left:594.50px"></div><div class="vl" style="left:629.40px"></div><div class="vl" style="left:663.60px"></div><span class="ct" style="left:3.00px;transform:scaleX(0.89)">1/24/2015</span><span class="ct" style="left:65.70px;transform:scaleX(0.86)">Saturday</span><span class="ct" style="left:120.20px;transform:scaleX(0.86)">12:00 PM</span><span class="ct" style="left:163.70px;transform:scaleX(0.81)">Gymnasium @ Crow Community Center</span><span class="ct" style="left:354.70px;transform:scaleX(0.84)">(5)&nbsp; Bulls</span><span class="ct" style="left:474.20px;transform:scaleX(0.85)">(1)&nbsp; Heat</span><span class="ct rt" style="left:auto;right:35.80px;transform:scaleX(0.88)"></span><span class="ct rt" style="left:auto;right:1.60px;transform:scaleX(0.88)"></span></div><div class="rh" style="top:408.950px"></div>
</div>
</div>
<!-- scrollbar -->
<div id="sb" class="a"></div>
<div class="sbb" style="top:122.3px"></div>
<div id="thumb" class="a"></div>
<div class="a" style="left:686px;top:216px;width:5px;height:1px;background:#e8f0fa;box-shadow:0 2px 0 #e8f0fa"></div>
<div class="sbb" style="top:407.7px"></div>
<svg class="a" style="left:682.7px;top:122.3px" width="11" height="11" viewBox="0 0 11 11"><path d="M2.8 6.8L5.5 4.2L8.2 6.8" fill="none" stroke="#fff" stroke-width="1.6"/></svg>
<svg class="a" style="left:682.7px;top:407.7px" width="11" height="11" viewBox="0 0 11 11"><path d="M2.8 4.4L5.5 7L8.2 4.4" fill="none" stroke="#fff" stroke-width="1.6"/></svg>
<!-- footer -->
<div id="foot" class="a"></div>
<div class="leg" style="left:471px;width:69.5px;background:#ff4500;border:1px solid #d84a28;color:#6e0000"><span style="display:inline-block;transform:scaleX(.87)">Completed</span></div>
<div class="leg" style="left:544.5px;width:70.5px;background:#90ee90;border:1px solid #7cd07c;color:#0a4a0a"><span style="display:inline-block;transform:scaleX(.87)">Score Pending</span></div>
<div class="leg" style="left:618.7px;width:70px;background:#ffff00;border:1px solid #d6c800;color:#222"><span style="display:inline-block;transform:scaleX(.87)">To Be Played</span></div>
<!-- bottom left button -->
<div class="a" style="left:6px;top:422px;width:68.7px;height:34.3px;border:1px solid #9fb9dc;border-radius:3px;background:linear-gradient(#dde9f8,#bcd2ef);box-shadow:inset 0 0 0 1px rgba(255,255,255,.5)"></div>
<svg class="a" style="left:9.5px;top:431px" width="15" height="16" viewBox="0 0 15 16"><path d="M1 3H7V14H1Z" fill="#e6e3dc" stroke="#9a948a" stroke-width=".8"/><path d="M4 1.5H11.5V15H4Z" fill="#f6f2e6" stroke="#7d776c" stroke-width=".9"/><path d="M5.5 4H10M5.5 6H10" stroke="#b0a890" stroke-width=".7"/><path d="M5.5 12.5L12.5 6" stroke="#e89a2a" stroke-width="1.8"/><path d="M5.2 13L6.3 11.6" stroke="#5a4a30" stroke-width="1"/></svg>
<!-- borders -->
<div class="a" style="left:0;top:19px;width:4.3px;height:440px;background:linear-gradient(90deg,#bcd0ea,#c8daf0)"></div>
<div class="a" style="left:4.3px;top:88px;width:1.7px;height:333px;background:#dbe8f7"></div>
<div class="a" style="left:696px;top:19px;width:4px;height:440px;background:linear-gradient(90deg,#d2e1f4,#c6d8ef)"></div>
<div id="border-b" class="a"></div>
<!-- logo watermark -->
<div class="a" style="left:24px;top:348px;width:28.2px;height:111.4px;background:#ffe03a"></div>
<div class="a" style="left:52.2px;top:433.8px;width:46.5px;height:24.4px;background:linear-gradient(90deg,#7a4412 0,#b87422 10%,#eea830 30%,#f7b836 65%,#fabd3a)"></div>
</div></body></html>
